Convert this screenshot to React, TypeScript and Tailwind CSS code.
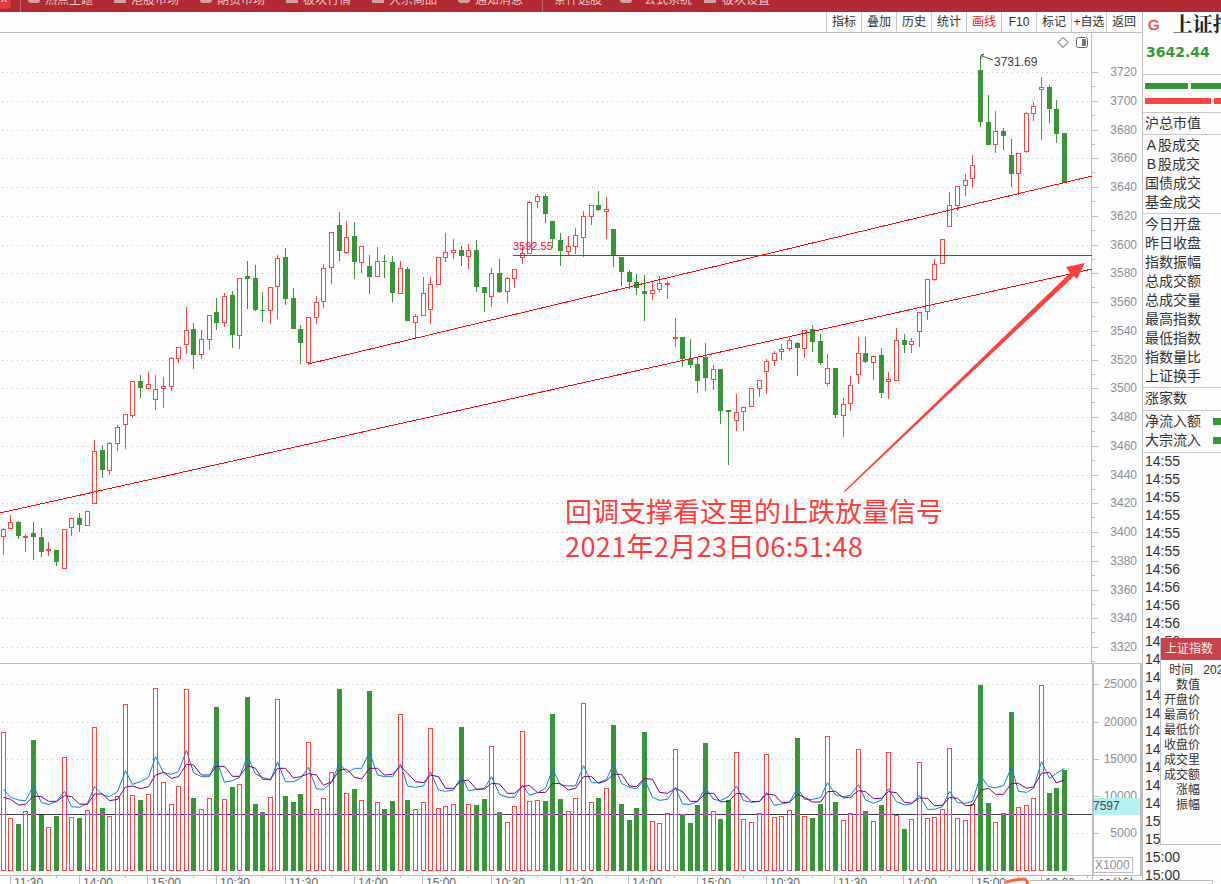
const UP = "#ff4242";
const DOWN = "#389638";
const AXIS = "#bdbdbd";
const LABEL = "#8b8f9b";
const TREND = "#fa0c0c";

// wick top, body top, body bottom, wick bottom, 1 = rising (hollow red)
const candles: number[][] = [
  [528, 529, 537, 555, 1], [515, 522, 529, 529, 1], [521, 522, 536, 539, 0], [534, 536, 537, 552, 1], [522, 533, 537, 560, 0],
  [528, 537, 552, 557, 0], [542, 549, 551, 556, 1], [550, 550, 562, 566, 0], [529, 529, 569, 569, 1], [518, 518, 528, 536, 1],
  [513, 518, 525, 532, 0], [511, 511, 526, 526, 1], [440, 451, 504, 504, 1], [445, 450, 470, 478, 0], [442, 443, 471, 475, 1],
  [425, 427, 444, 451, 1], [414, 414, 425, 449, 1], [381, 381, 416, 418, 1], [375, 381, 388, 398, 0], [372, 384, 389, 390, 1],
  [375, 389, 400, 410, 1], [377, 386, 389, 408, 1], [357, 358, 387, 391, 1], [347, 347, 359, 363, 1], [307, 330, 345, 354, 1],
  [323, 329, 355, 369, 0], [330, 339, 355, 359, 1], [315, 315, 340, 350, 1], [298, 312, 323, 330, 0], [293, 296, 323, 327, 1],
  [291, 295, 335, 348, 0], [278, 278, 336, 349, 1], [261, 276, 279, 309, 0], [265, 278, 310, 311, 0], [292, 310, 311, 322, 0],
  [287, 287, 311, 324, 1], [255, 258, 287, 319, 1], [248, 257, 299, 305, 0], [288, 298, 329, 329, 0], [325, 329, 343, 364, 0],
  [317, 317, 363, 365, 1], [296, 302, 318, 324, 1], [264, 268, 302, 308, 1], [232, 232, 268, 284, 1], [212, 225, 251, 261, 0],
  [221, 237, 253, 254, 1], [222, 236, 262, 279, 0], [246, 246, 263, 273, 1], [255, 266, 277, 294, 0], [247, 261, 277, 277, 1],
  [255, 261, 262, 278, 0], [256, 262, 293, 302, 0], [261, 268, 294, 294, 1], [267, 269, 321, 321, 0], [314, 316, 323, 338, 1],
  [277, 293, 316, 316, 1], [277, 284, 310, 324, 1], [257, 257, 285, 285, 1], [233, 252, 258, 262, 1], [239, 250, 253, 259, 1],
  [246, 250, 256, 266, 0], [244, 250, 257, 269, 1], [240, 250, 287, 292, 0], [287, 287, 293, 312, 0], [268, 273, 297, 307, 1],
  [259, 273, 292, 293, 0], [277, 278, 292, 303, 1], [269, 269, 279, 288, 1], [247, 253, 258, 264, 1], [201, 202, 254, 254, 1],
  [194, 196, 202, 208, 1], [194, 196, 214, 223, 0], [221, 221, 239, 248, 0], [233, 240, 251, 266, 0], [236, 246, 252, 255, 1],
  [228, 235, 247, 254, 1], [211, 216, 238, 257, 1], [205, 205, 217, 225, 1], [191, 205, 210, 211, 0], [197, 209, 212, 239, 1],
  [229, 229, 255, 267, 0], [257, 257, 272, 286, 0], [270, 272, 282, 289, 0], [274, 282, 288, 295, 0], [275, 291, 294, 321, 0],
  [282, 290, 294, 300, 1], [276, 283, 290, 292, 1], [281, 283, 284, 299, 1], [318, 337, 339, 347, 1], [337, 337, 359, 367, 0],
  [339, 359, 365, 368, 0], [358, 364, 381, 393, 0], [343, 357, 378, 391, 0], [365, 369, 380, 390, 1], [369, 369, 411, 424, 0],
  [410, 410, 412, 465, 0], [394, 412, 421, 431, 1], [407, 407, 412, 431, 1], [388, 388, 407, 407, 1], [380, 380, 389, 397, 1],
  [359, 361, 372, 394, 1], [351, 353, 361, 366, 1], [344, 349, 352, 360, 1], [338, 340, 349, 351, 1], [342, 343, 348, 376, 0],
  [330, 330, 349, 358, 1], [325, 329, 342, 352, 0], [334, 341, 363, 365, 0], [354, 368, 384, 386, 1], [368, 368, 415, 418, 0],
  [398, 404, 416, 437, 1], [376, 385, 404, 411, 1], [337, 353, 375, 384, 1], [337, 353, 362, 363, 0], [355, 356, 363, 380, 1],
  [348, 355, 393, 398, 0], [372, 379, 382, 399, 1], [328, 340, 381, 381, 1], [334, 340, 345, 353, 0], [338, 341, 345, 353, 1],
  [312, 312, 332, 347, 1], [279, 279, 312, 320, 1], [259, 264, 280, 281, 1], [239, 239, 264, 264, 1], [192, 205, 227, 227, 1],
  [186, 186, 206, 211, 1], [174, 180, 186, 196, 1], [155, 165, 179, 188, 1], [56, 70, 122, 127, 0], [95, 122, 145, 145, 0],
  [111, 131, 145, 153, 1], [128, 131, 136, 150, 0], [139, 155, 174, 187, 0], [153, 153, 174, 195, 1], [112, 113, 152, 153, 1],
  [102, 106, 114, 121, 1], [77, 87, 90, 140, 1], [85, 87, 109, 123, 0], [100, 109, 134, 143, 0], [133, 133, 183, 183, 0],
];

// bar tops measured in thirds of a pixel below y=660, negative = falling (green)
const volumes = [
  216, 475, -492, 454, -240, -464, 502, -468, 292, 472, -474, 451, 202, -444, 469, 408, 133, 406, -420, 403,
  85, 367, 433, 379, 88, -414, 448, 414, -141, 418, -381, 373, -111, -432, -456, 412, 118, -408, -426, -402,
  247, 448, 415, 337, -87, 400, -387, 421, -93, 427, -447, -423, 163, -420, 448, 427, 205, 445, 439, 433,
  -201, 433, -435, -417, 259, -456, 487, 439, 214, 424, 421, -423, -162, -417, 454, 415, 130, 427, -414, 385,
  -195, -432, -480, -444, -216, 484, 490, 460, 268, -463, -489, -435, -249, 454, -477, -420, 277, 478, 487, 460,
  283, 472, 469, 451, -234, 469, -474, -432, 229, -426, 481, 460, 268, -453, 484, -435, 277, 466, -507, 478,
  307, 475, 472, 448, 265, 475, 481, 433, -75, -429, 487, -459, -156, 442, 436, 415, 76, -399, -384, -330,
];

const fastAvg = [
  388, 412, 420, 422, 378, 428, 433, 425, 394, 440, 442, 430, 380, 405, 410, 395, 332, 373, 365, 352,
  290, 338, 343, 335, 271, 338, 350, 350, 300, 367, 362, 352, 288, 342, 352, 360, 306, 365, 365, 355,
  322, 387, 388, 368, 308, 338, 325, 325, 277, 345, 350, 350, 312, 378, 382, 378, 335, 390, 394, 390,
  348, 392, 388, 385, 350, 403, 412, 412, 375, 406, 398, 385, 328, 375, 378, 377, 317, 368, 368, 358,
  312, 370, 382, 387, 358, 412, 421, 418, 383, 432, 433, 425, 383, 418, 422, 410, 378, 422, 427, 424,
  398, 436, 432, 427, 384, 418, 418, 413, 368, 405, 410, 405, 374, 420, 430, 420, 386, 425, 435, 432,
  406, 448, 448, 440, 394, 428, 430, 424, 347, 380, 383, 377, 322, 394, 397, 385, 305, 355, 340, 325,
];

const slowAvg = [
  412, 418, 435, 433, 408, 410, 424, 424, 407, 410, 432, 433, 402, 402, 422, 418, 381, 378, 386, 380,
  345, 337, 355, 350, 313, 315, 345, 345, 319, 319, 349, 349, 317, 325, 358, 358, 325, 325, 354, 350,
  341, 345, 376, 365, 330, 327, 352, 357, 325, 325, 345, 343, 318, 340, 365, 368, 345, 350, 385, 385,
  362, 361, 388, 387, 370, 372, 400, 400, 380, 376, 398, 397, 370, 371, 390, 385, 350, 350, 370, 362,
  343, 343, 378, 380, 355, 358, 397, 400, 385, 395, 424, 424, 400, 400, 426, 424, 400, 402, 425, 424,
  402, 405, 427, 427, 403, 412, 426, 426, 395, 394, 414, 411, 392, 395, 416, 415, 395, 398, 427, 429,
  414, 415, 437, 436, 412, 415, 437, 436, 391, 385, 403, 403, 370, 370, 385, 381, 340, 337, 369, 359,
];

const barX = (i: number) => Math.round(2.5 + i * 7.637);
const priceY = (v: number) => Math.round(72 + (3720 - v) * 1.4375);
const priceTicks = Array.from({ length: 21 }, (_, i) => 3720 - i * 20);
const volumeTicks = [
  { y: 684, label: "25000" },
  { y: 722, label: "20000" },
  { y: 759, label: "15000" },
  { y: 796, label: "10000" },
  { y: 833, label: "5000" },
];
const timeLabels = ["11:30", "14:00", "15:00", "10:30"];

const toPoints = (list: number[]) =>
  list.map((z, i) => `${barX(i) + 0.5},${660 + z / 3}`).join(" ");

function PriceChart() {
  return (
    <svg width={1142} height={630} viewBox="0 33 1142 630" className="block">
      {priceTicks.map((v) => (
        <line key={v} x1={2} x2={1088} y1={priceY(v) + 0.5} y2={priceY(v) + 0.5} stroke="#c4c4c4" strokeDasharray="1 4" />
      ))}
      <rect x={1091} y={33} width={1} height={630} fill={AXIS} />
      {priceTicks.map((v) => (
        <g key={v}>
          <rect x={1092} y={priceY(v)} width={6} height={1} fill={AXIS} />
          <rect x={1092} y={priceY(v) + 14} width={3} height={1} fill={AXIS} />
          {v > 3300 && (
            <text x={1137} y={priceY(v) + 3.6} textAnchor="end" fontSize={12} fill={LABEL}>
              {v}
            </text>
          )}
        </g>
      ))}

      <g shapeRendering="crispEdges">
        {candles.map(([wickTop, top, bottom, wickBottom, rising], i) => {
          const x = barX(i) - 2;
          const color = rising ? UP : DOWN;
          return (
            <g key={i}>
              <rect x={x + 2} y={wickTop} width={1} height={wickBottom - wickTop} fill={color} />
              {rising ? (
                <rect x={x + 0.5} y={top + 0.5} width={4} height={Math.max(1, bottom - top - 1)} fill="#fff" stroke={color} />
              ) : (
                <rect x={x} y={top} width={5} height={Math.max(1, bottom - top)} fill={color} />
              )}
            </g>
          );
        })}
        <line x1={308} y1={364} x2={1092} y2={176} stroke={TREND} />
        <line x1={0} y1={513} x2={1092} y2={269} stroke={TREND} />
        <line x1={513} y1={255.5} x2={1092} y2={255.5} stroke={TREND} />
      </g>
      <text x={513} y={250} fontSize={11} fill={TREND}>
        3592.55
      </text>

      <polyline points="981,59 981,55 984,54 982,56 993,60" fill="none" stroke="#555" />
      <text x={994} y={66} fontSize={12} fill="#444">
        3731.69
      </text>
      <path d="M1063 37.5 L1068 42.5 L1063 47.5 L1058 42.5 Z" fill="#fff" stroke="#555" />
      <rect x={1076.5} y={37.5} width={11} height={10} rx={2} fill="#fff" stroke="#666" />
      <rect x={1082} y={39} width={4} height={7} fill="#777" />

      <polygon
        points="843,492 1070,273 1066,267 1085,263 1077,279 1074,276 846,491"
        fill="#ff4040"
      />
    </svg>
  );
}

function VolumeChart() {
  return (
    <svg width={1142} height={220} viewBox="0 664 1142 220" className="block">
      {volumeTicks.map((t) => (
        <line key={t.y} x1={2} x2={1088} y1={t.y + 0.5} y2={t.y + 0.5} stroke="#c4c4c4" strokeDasharray="1 4" />
      ))}
      <g shapeRendering="crispEdges">
        {volumes.map((v, i) => {
          const x = barX(i) - 2;
          const top = Math.round(660 + Math.abs(v) / 3);
          return v > 0 ? (
            <rect key={i} x={x + 0.5} y={top + 0.5} width={4} height={871 - top - 1} fill="#fff" stroke={UP} />
          ) : (
            <rect key={i} x={x} y={top} width={5} height={871 - top} fill={DOWN} />
          );
        })}
      </g>
      <polyline points={toPoints(fastAvg)} fill="none" stroke="#0a80dc" />
      <polyline points={toPoints(slowAvg)} fill="none" stroke="#800080" />
      <g shapeRendering="crispEdges">
        <rect x={0} y={814} width={1092} height={1} fill="#3c3c3c" />
        {volumes.map((v, i) =>
          Math.abs(v) < 464 ? <rect key={i} x={barX(i) - 2} y={814} width={5} height={1} fill="#c657c6" /> : null
        )}
      </g>

      <rect x={1092} y={664} width={2} height={212} fill={AXIS} />
      <rect x={1140} y={664} width={2} height={212} fill={AXIS} />
      {volumeTicks.map((t) => (
        <g key={t.label}>
          <rect x={1094} y={t.y} width={5} height={1} fill={AXIS} />
          <text x={1137} y={t.y + 4} textAnchor="end" fontSize={12} fill={LABEL}>
            {t.label}
          </text>
        </g>
      ))}
      <rect x={1094} y={798} width={46} height={17} fill="#b6f0f0" />
      <text x={1093} y={810} fontSize={12} fill="#444">
        7597
      </text>
      <rect x={1093.5} y={857.5} width={39} height={15} fill="#fdfdfd" stroke={AXIS} />
      <text x={1095} y={869} fontSize={12} fill={LABEL}>
        X1000
      </text>

      <rect x={0} y={875} width={1142} height={1} fill={AXIS} />
      {Array.from({ length: 16 }, (_, i) => {
        const x = Math.round(10 + i * 68.7);
        return (
          <g key={i}>
            <rect x={x} y={875} width={1} height={9} fill={AXIS} />
            <rect x={x + 23} y={875} width={1} height={3} fill={AXIS} />
            <rect x={x + 46} y={875} width={1} height={3} fill={AXIS} />
            <text x={x + 4} y={887} fontSize={12} fill="#666">
              {timeLabels[i % 4]}
            </text>
          </g>
        );
      })}
      <rect x={1092} y={875} width={50} height={9} fill="#fdfdfd" />
      <rect x={1092} y={875} width={50} height={1} fill={AXIS} />
      <rect x={1092} y={875} width={1} height={9} fill={AXIS} />
      <text x={1098} y={888} fontSize={12} fill="#555">
        60分钟
      </text>
    </svg>
  );
}

function TopBar() {
  const tabs = [
    { label: "热点主题", round: true },
    { label: "港股市场", round: false },
    { label: "期货市场", round: true },
    { label: "板块行情", round: false },
    { label: "大宗商品", round: false },
    { label: "通知消息", round: true },
  ];
  return (
    <div className="flex h-3 overflow-hidden bg-[#b22a32] text-xs leading-4 text-[#ecc6c8]">
      <div className="h-[9px] w-[11px] overflow-hidden rounded-br bg-[#e23a3e] pl-[1px] text-white">
        <div className="-mt-[10px]">x</div>
      </div>
      <div className="ml-[9px] h-3 w-px bg-[#c9646a]" />
      <div className="ml-[7px] flex">
        {tabs.map((t) => (
          <div key={t.label} className="flex w-[86px] items-start">
            <div className={`mr-[5px] h-[3px] w-[12px] bg-[#d99ea2] ${t.round ? "rounded-b-full" : ""}`} />
            <span className="-mt-[8px] whitespace-nowrap">{t.label}</span>
          </div>
        ))}
      </div>
      <div className="-ml-[2px] h-3 w-px bg-[#c9646a]" />
      <div className="ml-[11px] flex items-start">
        <span className="-mt-[8px] mr-[18px] whitespace-nowrap">条件选股</span>
        <div className="mr-[12px] h-[3px] w-[12px] rounded-b-full bg-[#d99ea2]" />
        <span className="-mt-[8px] mr-[12px] whitespace-nowrap">公式系统</span>
        <div className="mr-[6px] h-[3px] w-[12px] bg-[#d99ea2]" />
        <span className="-mt-[8px] whitespace-nowrap">板块设置</span>
      </div>
    </div>
  );
}

function Toolbar() {
  const items = ["指标", "叠加", "历史", "统计", "画线", "F10", "标记", "+自选", "返回"];
  return (
    <div className="flex h-[21px] justify-end border-b border-[#bdbdbd] text-xs leading-[20px] text-[#333]">
      {items.map((item) => (
        <div
          key={item}
          className={`w-[35px] whitespace-nowrap border-l border-[#c8c8c8] text-center ${item === "画线" ? "text-[#f01818]" : ""}`}
        >
          {item}
        </div>
      ))}
      <div className="w-px" />
    </div>
  );
}

function SideRow({ label, flow, lead }: { label: string; flow?: boolean; lead?: string }) {
  return (
    <div className="flex h-[19px] items-center justify-between pl-[2px] text-[14px] leading-[19px] text-[#333]">
      <span className="flex whitespace-nowrap">
        {lead && <span className="w-[13px] pr-[2px] text-right">{lead}</span>}
        {label}
      </span>
      {flow && <div className="h-[7px] w-[8px] bg-[#389638]" />}
    </div>
  );
}

function SidePanel() {
  const ticks = Array.from({ length: 24 }, (_, i) =>
    i < 6 ? "14:55" : i < 11 ? "14:56" : i < 20 ? "14:57" : "15:00"
  );
  const indexRows = ["今日开盘", "昨日收盘", "指数振幅", "总成交额", "总成交量", "最高指数", "最低指数", "指数量比", "上证换手"];
  const tipRows = ["时间", "数值", "开盘价", "最高价", "最低价", "收盘价", "成交里", "成交额", "涨幅", "振幅"];
  return (
    <div className="relative h-[872px] w-[79px] overflow-hidden border-l border-[#bdbdbd]">
      <div className="h-[63px] border-b border-[#c8c8c8]">
        <div className="flex h-[24px] items-end pl-[5px]">
          <span className="mb-[1px] text-[15px] leading-[20px] text-[#f04a4a] [-webkit-text-stroke:0.4px_#f04a4a]">G</span>
          <div className="mb-[5px] ml-[7px] flex w-[7px] flex-col gap-[3px]">
            <div className="h-px bg-[#e88080]" />
            <div className="h-px bg-[#e88080]" />
            <div className="h-px bg-[#30d030]" />
          </div>
          <span className="ml-[6px] whitespace-nowrap text-[20px] font-bold leading-[24px] text-[#222] [font-family:'Noto_Serif_CJK_SC','Noto_Sans_CJK_SC',serif]">
            上证指数
          </span>
        </div>
        <div className="pl-[3px] pt-[5px] text-[14px] font-bold leading-[22px] text-[#389638] [font-family:'DejaVu_Sans',sans-serif]">
          3642.44
        </div>
      </div>
      <div className="h-[38px] border-b border-[#c8c8c8] pl-[2px] pt-[8px]">
        <div className="flex gap-[3px]">
          <div className="h-[6px] w-[44px] bg-[#389638]" />
          <div className="h-[6px] w-[30px] bg-[#389638]" />
        </div>
        <div className="mt-[9px] flex gap-[3px]">
          <div className="h-[6px] w-[67px] bg-[#ff4242]" />
          <div className="h-[6px] w-[7px] bg-[#ff4242]" />
        </div>
      </div>
      <div className="h-[22px] border-b border-[#c8c8c8] pt-px">
        <SideRow label="沪总市值" />
      </div>
      <div className="h-[79px] border-b border-[#c8c8c8] pt-px">
        <SideRow lead="A" label="股成交" />
        <SideRow lead="B" label="股成交" />
        <SideRow label="国债成交" />
        <SideRow label="基金成交" />
      </div>
      <div className="h-[174px] border-b border-[#c8c8c8] pt-px">
        {indexRows.map((r) => (
          <SideRow key={r} label={r} />
        ))}
      </div>
      <div className="h-[23px] border-b border-[#c8c8c8] pt-px">
        <SideRow label="涨家数" />
      </div>
      <div className="h-[42px] border-b border-[#c8c8c8] pt-px">
        <SideRow label="净流入额" flow />
        <SideRow label="大宗流入" flow />
      </div>
      <div className="-mt-px pl-[2px] text-[14px] leading-[18px] text-[#333]">
        {ticks.map((t, i) => (
          <div key={i} className="h-[18px]">
            {t}
          </div>
        ))}
      </div>

      <div className="absolute left-[17px] top-[626px] h-[207px] w-[70px] border-b border-l border-[#bdbdbd] bg-[#fdfdfd]">
        <div className="h-[22px] bg-[#c8444c] pl-[4px] text-xs leading-[22px] text-[#fde8e8]">上证指数</div>
        <div className="pt-[3px] text-xs leading-[15px] text-[#333]">
          {tipRows.map((r, i) => (
            <div key={r} className="flex h-[15px] whitespace-nowrap">
              <span className="w-[39px] text-right">{r}</span>
              {i === 0 && <span className="ml-[10px]">2021</span>}
            </div>
          ))}
        </div>
      </div>
    </div>
  );
}

export default function App() {
  return (
    <div className="relative h-[884px] w-[1221px] overflow-hidden bg-[#fdfdfd] [font-family:'Liberation_Sans','Noto_Sans_CJK_SC',sans-serif]">
      <TopBar />
      <div className="flex">
        <div className="w-[1142px] shrink-0">
          <Toolbar />
          <div className="relative">
            <PriceChart />
            <div className="absolute left-[565px] top-[460px] whitespace-nowrap text-[27px] leading-[35px] text-[#ff3b3b] [font-family:'Noto_Sans_CJK_SC',sans-serif]">
              <div>回调支撑看这里的止跌放量信号</div>
              <div className="tracking-[0.4px]">2021年2月23日06:51:48</div>
            </div>
          </div>
          <div className="h-px bg-[#bdbdbd]" />
          <VolumeChart />
        </div>
        <SidePanel />
      </div>
      {/* clipped window and scribble along the bottom edge */}
      <div className="absolute left-[1026px] top-[880px] h-[4px] w-[187px] border-l border-r border-t border-[#bdbdbd] bg-[#fdfdfd]" />
      <svg width={26} height={8} className="absolute left-[1005px] top-[876px]">
        <path d="M1 6 C8 4 14 3 20 3 C21 4 22 6 23 8" fill="none" stroke="#f26a3c" strokeWidth={3} />
      </svg>
    </div>
  );
}
